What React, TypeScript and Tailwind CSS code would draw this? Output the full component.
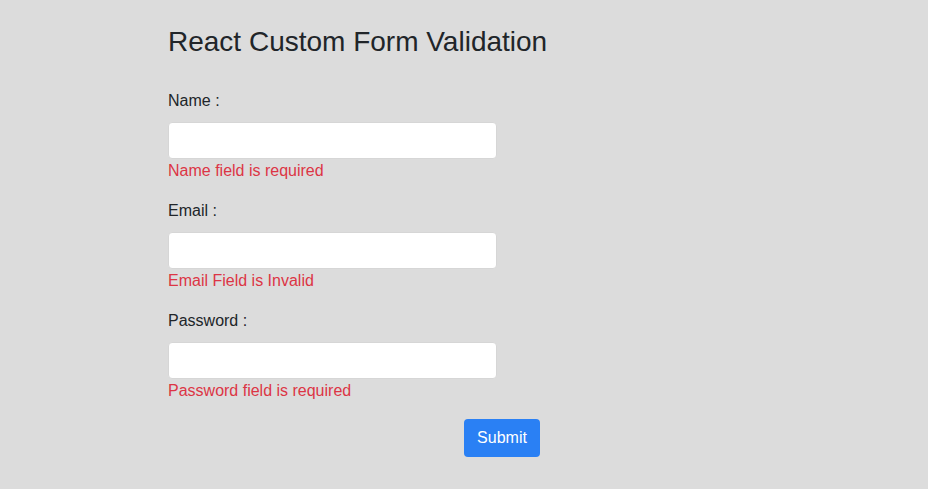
import React, { useState } from 'react';

const fields = [
  { id: 'name', label: 'Name :', type: 'text', error: 'Name field is required' },
  { id: 'email', label: 'Email :', type: 'email', error: 'Email Field is Invalid' },
  { id: 'password', label: 'Password :', type: 'password', error: 'Password field is required' },
];

export default function App() {
  const [values, setValues] = useState<Record<string, string>>({ name: '', email: '', password: '' });

  return (
    <div className="min-h-screen w-full bg-[#dcdcdc] font-['Liberation_Sans',Arial,sans-serif] text-[#212529]">
      <div className="pl-[168px] pt-[25px]">
        <h3 className="text-[28px] leading-[1.2] font-normal">React Custom Form Validation</h3>

        <form className="mt-[30px] w-[372px]" onSubmit={(e) => e.preventDefault()}>
          {fields.map((f) => (
            <div key={f.id} className="mb-[16px]">
              <label htmlFor={f.id} className="block text-base leading-6">
                {f.label}
              </label>
              <input
                id={f.id}
                type={f.type}
                value={values[f.id]}
                onChange={(e) => setValues({ ...values, [f.id]: e.target.value })}
                className="mt-[9px] block h-[37px] w-[329px] rounded-[4px] border border-[#d6d6d6] bg-white px-3 outline-none"
              />
              <div className="text-base leading-6 text-[#dc3545]">{f.error}</div>
            </div>
          ))}
          <div>
            <button
              type="submit"
              className="ml-[296px] h-[38px] w-[76px] rounded-[4px] bg-[#2a80f4] text-base text-white"
            >
              Submit
            </button>
          </div>
        </form>
      </div>
    </div>
  );
}
